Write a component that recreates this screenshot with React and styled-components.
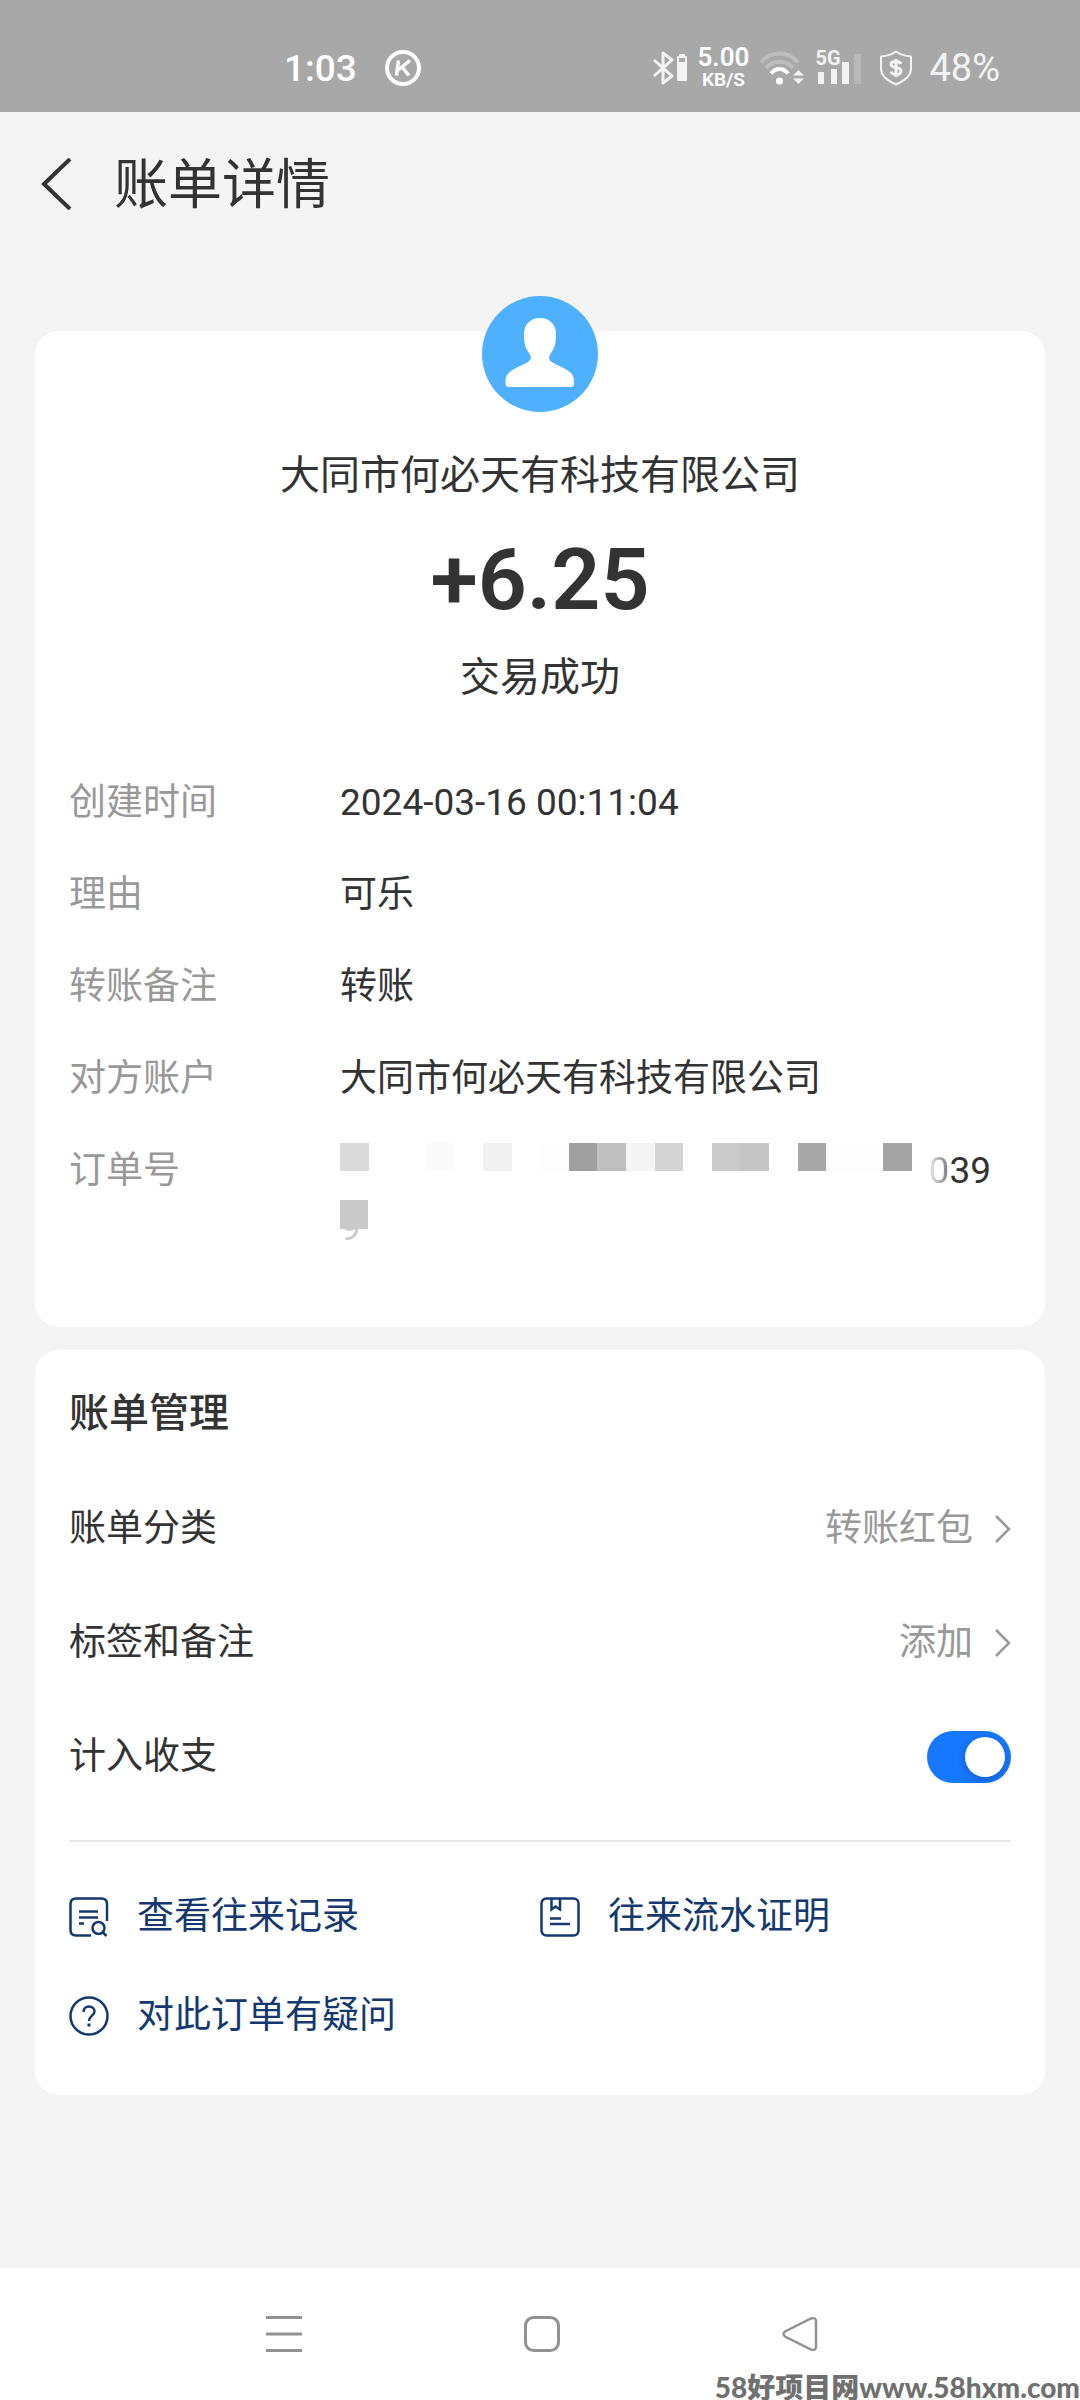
import React, { useState } from "react";
import styled, { createGlobalStyle } from "styled-components";

const mosaic = [
	"#dadada",
	"#fff",
	"#fff",
	"#fafafa",
	"#fff",
	"#f1f1f1",
	"#fff",
	"#fdfdfd",
	"#a0a0a0",
	"#bfbfbf",
	"#f5f5f5",
	"#d5d5d5",
	"#fff",
	"#cbcbcb",
	"#c5c5c5",
	"#fff",
	"#a8a8a8",
	"#fdfdfd",
	"#fdfdfd",
	"#a4a4a4",
];

const details = [
	{ label: "创建时间", value: "2024-03-16 00:11:04" },
	{ label: "理由", value: "可乐" },
	{ label: "转账备注", value: "转账" },
	{ label: "对方账户", value: "大同市何必天有科技有限公司" },
];

const KIcon = () => (
	<svg width="36" height="36" viewBox="0 0 36 36" fill="none" stroke="#fff">
		<circle cx="18" cy="18" r="16" strokeWidth="4" />
		<path d="M13.500 10.500L11.500 25.500M25 10.500L13 20M17 17L24 25.500" strokeWidth="3.500" />
	</svg>
);

const BluetoothIcon = () => (
	<svg width="36" height="36" viewBox="0 0 36 36" fill="none">
		<path
			d="M2 10L20 26L11 33V3L20 10L2 26"
			stroke="#f3f3f3"
			strokeWidth="3"
			strokeLinejoin="round"
		/>
		<rect x="27" y="4" width="6" height="2" fill="#f3f3f3" />
		<path d="M26 7H34V30H26Z" stroke="#f3f3f3" strokeWidth="2" strokeLinejoin="round" />
		<rect x="26" y="12" width="8" height="18" fill="#f3f3f3" />
	</svg>
);

const WifiIcon = () => (
	<svg width="46" height="36" viewBox="0 0 46 36" fill="none">
		<path d="M2 12.500C12 0.500 29 0.500 39 12.500" stroke="#bdbdbd" strokeWidth="4" />
		<path d="M7 18C14 9.500 27 9.500 34 18" stroke="#bdbdbd" strokeWidth="4" />
		<path d="M12 23.500C17 17.500 24 17.500 29 23.500" stroke="#fff" strokeWidth="4" />
		<circle cx="20.500" cy="31" r="3.500" fill="#fff" />
		<path d="M34 25.500L39.500 20L45 25.500ZM34 28.500L39.500 34L45 28.500Z" fill="#f3f3f3" />
	</svg>
);

const BarsIcon = () => (
	<svg width="46" height="32" viewBox="0 0 46 32">
		<rect x="3" y="20" width="6" height="12" fill="#f3f3f3" />
		<rect x="16" y="17" width="6" height="15" fill="#f3f3f3" />
		<rect x="27" y="10" width="7" height="22" fill="#f3f3f3" />
		<rect x="39" y="2" width="7" height="30" fill="#b8b8b8" />
	</svg>
);

const ShieldIcon = () => (
	<svg width="34" height="36" viewBox="0 0 34 36" fill="none" stroke="#f3f3f3">
		<path
			d="M17 1.500C21 4.500 26 6 32 6.500V19C32 26 25 31 17 34.500C9 31 2 26 2 19V6.500C8 6 13 4.500 17 1.500Z"
			strokeWidth="2"
			strokeLinejoin="round"
		/>
		<path
			d="M22 14C21 12 19.500 11.500 17 11.500C14 11.500 12 12.500 12 14.500C12 19 22 16 22 21C22 23.500 20 24.500 17 24.500C14.500 24.500 12.500 23.500 12 21.500M17 9V27"
			strokeWidth="3"
		/>
	</svg>
);

const AvatarIcon = () => (
	<svg width="116" height="116" viewBox="0 0 116 116">
		<circle cx="58" cy="58" r="58" fill="#4fb0ff" />
		<path
			d="M58 22C67 22 74 28 74 38C74 48 72.500 52 69 57C66.500 60.500 66.500 63 69 65.500C76 70.500 92 74 92 84V88Q92 91 89 91H26.500Q23.500 91 23.500 88V84C23.500 74 39.500 70.500 46.500 65.500C49.500 63 49.500 60.500 47 57C43.500 52 42 48 42 38C42 28 49 22 58 22Z"
			fill="#fff"
		/>
	</svg>
);

const Chevron = () => (
	<svg width="16" height="28" viewBox="0 0 16 28" fill="none">
		<path d="M1 1L14 14L1 27" stroke="#999" strokeWidth="2.500" />
	</svg>
);

const RecordIcon = () => (
	<svg width="40" height="40" viewBox="0 0 40 40" fill="none" stroke="#15396f" strokeWidth="2.500">
		<path d="M38 24V7Q38 1.500 32.500 1.500H7Q1.500 1.500 1.500 7V33Q1.500 38.500 7 38.500H22" />
		<path d="M10 14.500H29M10 20.500H29M10 26.500H15" />
		<circle cx="29.500" cy="31" r="6" />
		<path d="M33.500 35L37.500 39" />
	</svg>
);

const ProofIcon = () => (
	<svg width="40" height="40" viewBox="0 0 40 40" fill="none" stroke="#15396f" strokeWidth="2.500">
		<rect x="1.500" y="1.500" width="37" height="37" rx="5" />
		<path d="M11.500 2V12.500L15.500 9.500L20 12.500V2M10 21.500H21M10 27H30" />
	</svg>
);

const QuestionIcon = () => (
	<svg width="40" height="40" viewBox="0 0 40 40" fill="none" stroke="#15396f" strokeWidth="2.500">
		<circle cx="20" cy="20" r="18.500" />
		<path d="M14.500 16C14.500 12.500 17 10.500 20 10.500C23.500 10.500 25.500 13 25.500 15.500C25.500 19.500 20 20 20 25" />
		<path d="M20 27.500V30.500" strokeWidth="3" />
	</svg>
);

const App = () => {
	const [counted, setCounted] = useState(true);

	return (
		<Page>
			<GlobalStyle />
			<StatusBar>
				<StatusGroup>
					<Clock>1:03</Clock>
					<KIcon />
				</StatusGroup>
				<StatusIcons>
					<BluetoothIcon />
					<Speed>
						<strong>5.00</strong>
						<span>KB/S</span>
					</Speed>
					<WifiIcon />
					<Signal>
						<BarsIcon />
						<span>5G</span>
					</Signal>
					<ShieldIcon />
					<Battery>48%</Battery>
				</StatusIcons>
			</StatusBar>

			<Header>
				<BackButton type="button" aria-label="返回">
					<svg width="32" height="52" viewBox="0 0 32 52" fill="none">
						<path d="M30 1L4 26L30 51" stroke="#333" strokeWidth="4" />
					</svg>
				</BackButton>
				<h1>账单详情</h1>
			</Header>

			<Main>
				<Card>
					<Summary>
						<AvatarIcon />
						<Payee>大同市何必天有科技有限公司</Payee>
						<Amount>+6.25</Amount>
						<p>交易成功</p>
					</Summary>
					<Details>
						{details.map(({ label, value }) => (
							<DetailRow key={label}>
								<dt>{label}</dt>
								<dd>{value}</dd>
							</DetailRow>
						))}
						<DetailRow>
							<dt>订单号</dt>
							<dd>
								<OrderLine>
									<Mosaic>
										{mosaic.map((color, index) => (
											<Cell key={index} $color={color} />
										))}
									</Mosaic>
									<span>
										<Faded>0</Faded>39
									</span>
								</OrderLine>
								<Hidden>9</Hidden>
							</dd>
						</DetailRow>
					</Details>
				</Card>

				<ManageCard>
					<h2>账单管理</h2>
					<SettingRow as="button" type="button">
						<span>账单分类</span>
						<SettingValue>
							转账红包
							<Chevron />
						</SettingValue>
					</SettingRow>
					<SettingRow as="button" type="button">
						<span>标签和备注</span>
						<SettingValue>
							添加
							<Chevron />
						</SettingValue>
					</SettingRow>
					<SettingRow htmlFor="counted">
						<span>计入收支</span>
						<Switch
							id="counted"
							type="checkbox"
							role="switch"
							checked={counted}
							onChange={(e) => setCounted(e.target.checked)}
						/>
					</SettingRow>
					<Links>
						<a href="#records">
							<RecordIcon />
							查看往来记录
						</a>
						<a href="#proof">
							<ProofIcon />
							往来流水证明
						</a>
						<a href="#question">
							<QuestionIcon />
							对此订单有疑问
						</a>
					</Links>
				</ManageCard>
			</Main>

			<NavBar>
				<button type="button" aria-label="菜单">
					<svg width="36" height="36" viewBox="0 0 36 36" stroke="#929292" strokeWidth="3">
						<path d="M0 1.500H36M0 18H36M0 34.500H36" />
					</svg>
				</button>
				<button type="button" aria-label="主页">
					<svg width="36" height="36" viewBox="0 0 36 36" fill="none" stroke="#929292" strokeWidth="3">
						<rect x="1.500" y="1.500" width="33" height="33" rx="8" />
					</svg>
				</button>
				<button type="button" aria-label="后退">
					<svg width="36" height="36" viewBox="0 0 36 36" fill="none" stroke="#929292" strokeWidth="2.500">
						<path d="M3 15.500L29 2.500Q34 1 34 5.500V30.500Q34 35 29 33.500L3 20.500Q0 18 3 15.500Z" />
					</svg>
				</button>
				<Watermark>58好项目网www.58hxm.com</Watermark>
			</NavBar>
		</Page>
	);
};

const GlobalStyle = createGlobalStyle`
	* {
		box-sizing: border-box;
	}

	body {
		margin: 0;
		background-color: #f4f4f4;
		color: #333;
		font-family: Roboto, "Noto Sans CJK SC", sans-serif;
		font-size: 37px;
	}

	h1, h2, p, dl, dd {
		margin: 0;
	}

	button {
		padding: 0;
		border: none;
		background: none;
		color: inherit;
		font: inherit;
		cursor: pointer;
	}

	svg {
		display: block;
		flex-shrink: 0;
	}
`;

const Page = styled.div`
	display: flex;
	flex-direction: column;
	min-height: 100vh;
`;

const StatusBar = styled.div`
	display: flex;
	align-items: center;
	justify-content: space-between;
	height: 112px;
	padding: 24px 80px 0 284px;
	background-color: #a8a8a8;
	color: #fff;
`;

const StatusGroup = styled.div`
	display: flex;
	align-items: center;
	gap: 28px;
`;

const StatusIcons = styled.div`
	display: flex;
	align-items: center;
	gap: 10px;
`;

const Clock = styled.span`
	font-size: 37px;
	font-weight: 500;
`;

const Battery = styled.span`
	margin-left: 6px;
	color: #f3f3f3;
	font-size: 38px;
`;

const Speed = styled.div`
	display: flex;
	flex-direction: column;
	align-items: center;
	padding-bottom: 4px;
	font-weight: 600;

	strong {
		font-size: 26px;
		font-weight: 600;
		line-height: 26px;
	}

	span {
		font-size: 19px;
		line-height: 19px;
	}
`;

const Signal = styled.div`
	position: relative;
	margin-right: 8px;

	span {
		position: absolute;
		top: -4px;
		left: 0;
		color: #f3f3f3;
		font-size: 20px;
		font-weight: 700;
		line-height: 20px;
	}
`;

const Header = styled.header`
	display: flex;
	align-items: center;
	gap: 42px;
	height: 144px;
	padding: 0 40px;

	h1 {
		padding-top: 3px;
		font-size: 54px;
		font-weight: 400;
		line-height: 72px;
	}
`;

const BackButton = styled.button`
	display: flex;
`;

const Main = styled.main`
	display: flex;
	flex: 1;
	flex-direction: column;
	gap: 23px;
	padding: 75px 35px 100px;
`;

const Card = styled.section`
	padding: 0 34px 71px;
	border-radius: 24px;
	background-color: #fff;
`;

const Summary = styled.div`
	display: flex;
	flex-direction: column;
	align-items: center;
	margin-top: -35px;
	font-size: 40px;
	line-height: 56px;
`;

const Payee = styled.p`
	margin-top: 36px;
`;

const Amount = styled.p`
	margin: 28px 0 22px;
	font-size: 86px;
	font-weight: 600;
	line-height: 96px;
`;

const Details = styled.dl`
	display: flex;
	flex-direction: column;
	gap: 35px;
	margin-top: 68px;
`;

const DetailRow = styled.div`
	display: flex;
	line-height: 57px;

	dt {
		flex: 0 0 271px;
		color: #999;
	}

	dd {
		flex: 1;
	}
`;

const OrderLine = styled.div`
	display: flex;
	justify-content: space-between;
	padding-right: 20px;
`;

const Mosaic = styled.div`
	display: grid;
	flex: 0 0 572px;
	grid-template-columns: repeat(20, 1fr);
	height: 28px;
	margin-top: 1px;
`;

const Cell = styled.i`
	background-color: ${({ $color }) => $color};
`;

const Faded = styled.span`
	background: linear-gradient(to right, #eee, #777);
	background-clip: text;
	color: transparent;
`;

const Hidden = styled.div`
	position: relative;
	height: 57px;
	color: #ccc;

	&::after {
		content: "";
		position: absolute;
		top: 1px;
		left: 0;
		width: 28px;
		height: 29px;
		background-color: #c9c9c9;
	}
`;

const ManageCard = styled.section`
	padding: 36px 34px 51px;
	border-radius: 24px;
	background-color: #fff;

	h2 {
		margin-bottom: 30px;
		font-size: 40px;
		font-weight: 500;
		line-height: 56px;
	}
`;

const SettingRow = styled.label`
	display: flex;
	align-items: center;
	justify-content: space-between;
	width: 100%;
	height: 114px;
	line-height: 56px;
`;

const SettingValue = styled.span`
	display: flex;
	align-items: center;
	gap: 22px;
	color: #999;
`;

const Switch = styled.input`
	appearance: none;
	width: 84px;
	height: 52px;
	margin: 0;
	padding: 6px;
	border-radius: 26px;
	background-color: #ddd;
	cursor: pointer;

	&::before {
		content: "";
		display: block;
		width: 40px;
		height: 40px;
		border-radius: 50%;
		background-color: #fff;
		box-shadow: 0 3px 8px rgba(0, 0, 0, 0.2);
	}

	&:checked {
		background-color: #1677ff;
	}

	&:checked::before {
		margin-left: auto;
	}
`;

const Links = styled.nav`
	display: grid;
	grid-template-columns: 1fr 1fr;
	row-gap: 43px;
	margin-top: 26px;
	padding-top: 47px;
	border-top: 2px solid #e8e8e8;

	a {
		display: flex;
		align-items: center;
		gap: 28px;
		color: #15396f;
		line-height: 56px;
		text-decoration: none;
	}
`;

const NavBar = styled.footer`
	position: relative;
	display: grid;
	grid-template-columns: repeat(3, 24%);
	justify-content: center;
	height: 132px;
	padding-left: 4px;
	background-color: #fff;

	button {
		display: flex;
		align-items: center;
		justify-content: center;
	}
`;

const Watermark = styled.span`
	position: absolute;
	right: 0;
	bottom: 0;
	color: #707070;
	font-family: Lato, "Noto Sans CJK SC", sans-serif;
	font-size: 28px;
	font-weight: 900;
	line-height: 26px;
	white-space: nowrap;
`;

export default App;
